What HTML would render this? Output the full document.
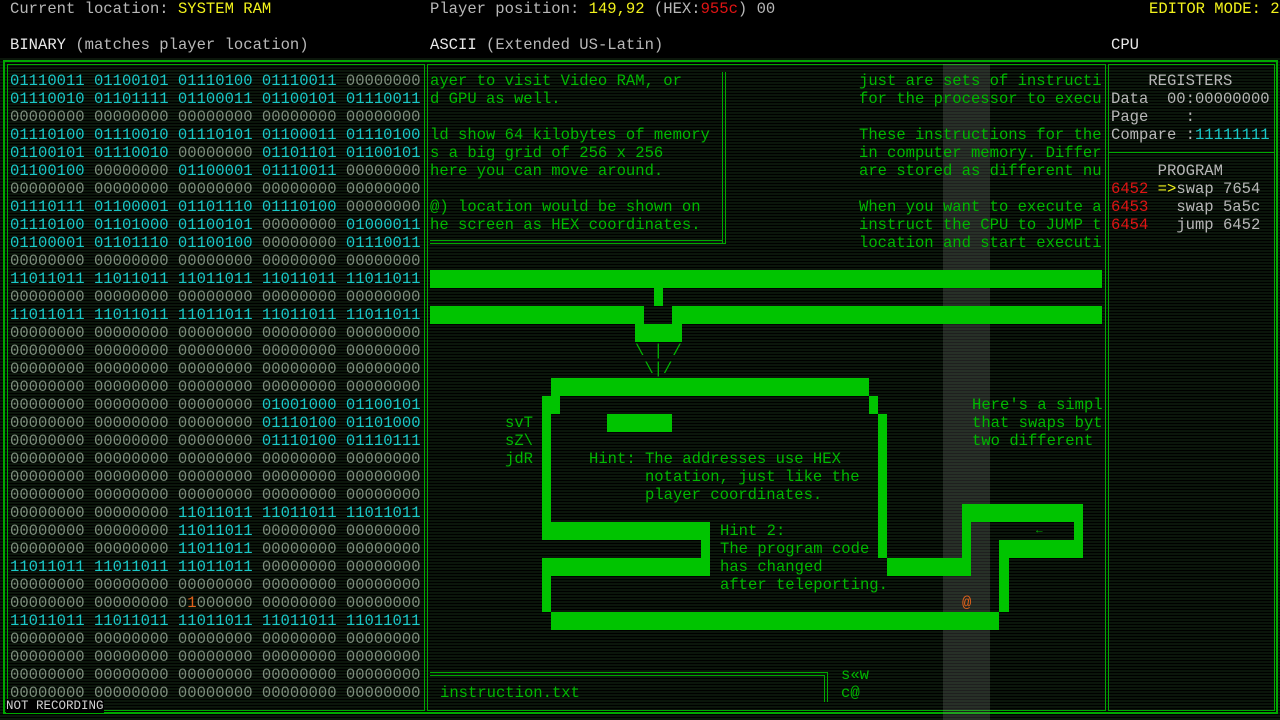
<!DOCTYPE html>
<html><head><meta charset="utf-8"><style>
*{margin:0;padding:0;box-sizing:border-box}
body{width:1280px;height:720px;overflow:hidden;background:#000;font-family:"Liberation Mono",monospace;font-size:15.56px;line-height:18px;color:#b8b8b8;position:relative}
.scan{position:absolute;left:0;top:58px;width:1280px;height:662px;background:repeating-linear-gradient(#0b160b 0 2px,#000 2px 3px)}
.t{position:absolute;white-space:pre}
.b{position:absolute;background:#00c400;left:calc(var(--c)*9.34px);top:calc(72px + var(--r)*18px);width:calc(var(--w,1)*9.34px);height:calc(var(--h,1)*18px)}
.g{color:#00b800}.c{color:#19c9c9}.z{color:#7e8e7e}.y{color:#f2f21c}.r{color:#e01414}.w{color:#e8e8e8}.o{color:#e0601a}
.ln{position:absolute;background:#00a800}
</style></head><body>
<div class="scan"></div>
<div class="t" style="left:10px;top:0">Current location: <span class="y">SYSTEM RAM</span></div>
<div class="t" style="left:430px;top:0">Player position: <span class="y">149,92</span> (HEX:<span class="r">955c</span>) 00</div>
<div class="t y" style="left:1149px;top:0">EDITOR MODE: 2</div>
<div class="t" style="left:10px;top:36px"><span class="w">BINARY</span> (matches player location)</div>
<div class="t" style="left:430px;top:36px"><span class="w">ASCII</span> (Extended US-Latin)</div>
<div class="t w" style="left:1111px;top:36px">CPU</div>
<div style="position:absolute;left:3px;top:60px;width:1275px;height:654px;border:2px solid #00a800"></div>
<div style="position:absolute;left:7px;top:64px;width:418px;height:647px;border:1px solid #00a800"></div>
<div style="position:absolute;left:427px;top:64px;width:679px;height:647px;border:1px solid #00a800"></div>
<div style="position:absolute;left:1108px;top:64px;width:167px;height:647px;border:1px solid #00a800"></div>
<div class="ln" style="left:1108px;top:152px;width:167px;height:1px"></div>
<div style="position:absolute;left:943px;top:64px;width:47px;height:656px;background:rgba(140,140,140,0.22)"></div>
<div class="t" style="left:10px;top:72px"><span class="c">01110011 01100101 01110100 01110011</span> <span class="z">00000000</span>
<span class="c">01110010 01101111 01100011 01100101 01110011</span>
<span class="z">00000000 00000000 00000000 00000000 00000000</span>
<span class="c">01110100 01110010 01110101 01100011 01110100</span>
<span class="c">01100101 01110010</span> <span class="z">00000000</span> <span class="c">01101101 01100101</span>
<span class="c">01100100</span> <span class="z">00000000</span> <span class="c">01100001 01110011</span> <span class="z">00000000</span>
<span class="z">00000000 00000000 00000000 00000000 00000000</span>
<span class="c">01110111 01100001 01101110 01110100</span> <span class="z">00000000</span>
<span class="c">01110100 01101000 01100101</span> <span class="z">00000000</span> <span class="c">01000011</span>
<span class="c">01100001 01101110 01100100</span> <span class="z">00000000</span> <span class="c">01110011</span>
<span class="z">00000000 00000000 00000000 00000000 00000000</span>
<span class="c">11011011 11011011 11011011 11011011 11011011</span>
<span class="z">00000000 00000000 00000000 00000000 00000000</span>
<span class="c">11011011 11011011 11011011 11011011 11011011</span>
<span class="z">00000000 00000000 00000000 00000000 00000000</span>
<span class="z">00000000 00000000 00000000 00000000 00000000</span>
<span class="z">00000000 00000000 00000000 00000000 00000000</span>
<span class="z">00000000 00000000 00000000 00000000 00000000</span>
<span class="z">00000000 00000000 00000000</span> <span class="c">01001000 01100101</span>
<span class="z">00000000 00000000 00000000</span> <span class="c">01110100 01101000</span>
<span class="z">00000000 00000000 00000000</span> <span class="c">01110100 01110111</span>
<span class="z">00000000 00000000 00000000 00000000 00000000</span>
<span class="z">00000000 00000000 00000000 00000000 00000000</span>
<span class="z">00000000 00000000 00000000 00000000 00000000</span>
<span class="z">00000000 00000000</span> <span class="c">11011011 11011011 11011011</span>
<span class="z">00000000 00000000</span> <span class="c">11011011</span> <span class="z">00000000 00000000</span>
<span class="z">00000000 00000000</span> <span class="c">11011011</span> <span class="z">00000000 00000000</span>
<span class="c">11011011 11011011 11011011</span> <span class="z">00000000 00000000</span>
<span class="z">00000000 00000000 00000000 00000000 00000000</span>
<span class="z">00000000 00000000 0</span><span class="o">1</span><span class="z">000000 00000000 00000000</span>
<span class="c">11011011 11011011 11011011 11011011 11011011</span>
<span class="z">00000000 00000000 00000000 00000000 00000000</span>
<span class="z">00000000 00000000 00000000 00000000 00000000</span>
<span class="z">00000000 00000000 00000000 00000000 00000000</span>
<span class="z">00000000 00000000 00000000 00000000 00000000</span></div>
<div class="t" style="left:6px;top:699px;font-size:12.5px;line-height:14px;color:#d0d0d0;background:#000">NOT RECORDING</div>
<div class="t g" style="left:430px;top:72px">ayer to visit Video RAM, or
d GPU as well.

ld show 64 kilobytes of memory
s a big grid of 256 x 256
here you can move around.

@) location would be shown on
he screen as HEX coordinates.</div>
<div class="ln" style="left:722px;top:72px;width:1px;height:171px"></div>
<div class="ln" style="left:725px;top:72px;width:1px;height:172px"></div>
<div class="ln" style="left:430px;top:240px;width:293px;height:1px"></div>
<div class="ln" style="left:430px;top:243px;width:296px;height:1px"></div>
<div class="t g" style="left:859px;top:72px">just are sets of instructi
for the processor to execu

These instructions for the
in computer memory. Differ
are stored as different nu

When you want to execute a
instruct the CPU to JUMP t
location and start executi</div>
<div class="b" style="--c:46;--r:11;--w:72"></div>
<div class="b" style="--c:70;--r:12"></div>
<div class="b" style="--c:46;--r:13;--w:23"></div>
<div class="b" style="--c:72;--r:13;--w:46"></div>
<div class="b" style="--c:68;--r:14;--w:5"></div>
<div class="t g" style="left:635px;top:342px">\ | /
 \|/</div>
<div class="b" style="--c:59;--r:17;--w:34"></div>
<div class="b" style="--c:58;--r:18;--w:2"></div>
<div class="b" style="--c:93;--r:18"></div>
<div class="b" style="--c:58;--r:18;--h:8"></div>
<div class="b" style="--c:58;--r:27;--h:3"></div>
<div class="b" style="--c:65;--r:19;--w:7"></div>
<div class="b" style="--c:94;--r:19;--h:8"></div>
<div class="b" style="--c:58;--r:25;--w:18"></div>
<div class="b" style="--c:75;--r:26"></div>
<div class="b" style="--c:58;--r:27;--w:18"></div>
<div class="b" style="--c:95;--r:27;--w:9"></div>
<div class="b" style="--c:103;--r:24;--w:13"></div>
<div class="b" style="--c:103;--r:25;--h:2"></div>
<div class="b" style="--c:115;--r:25"></div>
<div class="b" style="--c:107;--r:26;--w:9"></div>
<div class="b" style="--c:107;--r:27;--h:3"></div>
<div class="b" style="--c:59;--r:30;--w:48"></div>
<div class="t g" style="left:1036px;top:522px;font-size:11px">←</div>
<div class="t o" style="left:962px;top:594px">@</div>
<div class="t g" style="left:505px;top:414px">svT
sZ\
jdR</div>
<div class="t g" style="left:589px;top:450px">Hint: The addresses use HEX
      notation, just like the
      player coordinates.</div>
<div class="t g" style="left:720px;top:522px">Hint 2:
The program code
has changed
after teleporting.</div>
<div class="t g" style="left:972px;top:396px">Here's a simpl
that swaps byt
two different</div>
<div class="ln" style="left:430px;top:672px;width:398px;height:1px"></div>
<div class="ln" style="left:430px;top:675px;width:395px;height:1px"></div>
<div class="ln" style="left:824px;top:675px;width:1px;height:27px"></div>
<div class="ln" style="left:827px;top:672px;width:1px;height:30px"></div>
<div class="t g" style="left:440px;top:684px">instruction.txt</div>
<div class="t g" style="left:841px;top:666px">s«w
c@</div>
<div class="t" style="left:1111px;top:72px">    REGISTERS
Data  00:00000000
Page    :
Compare :<span class="c">11111111</span></div>
<div class="t" style="left:1111px;top:162px">     PROGRAM
<span class="r">6452</span> <span class="y">=&gt;</span>swap 7654
<span class="r">6453</span>   swap 5a5c
<span class="r">6454</span>   jump 6452</div>
</body></html>
